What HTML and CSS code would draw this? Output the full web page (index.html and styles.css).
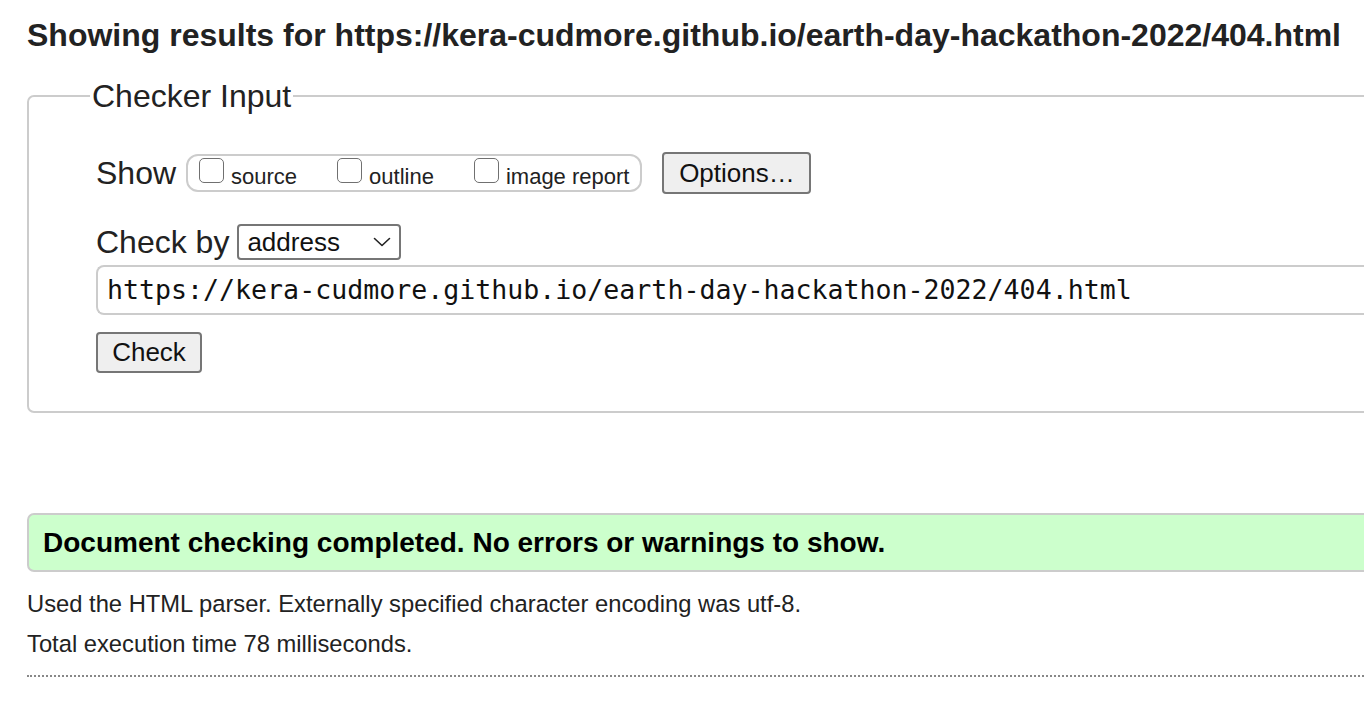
FILE: index.html
```html
<!DOCTYPE html>
<html lang="en">
<head>
<meta charset="utf-8">
<title>Showing results for https://kera-cudmore.github.io/earth-day-hackathon-2022/404.html - Nu Html Checker</title>
<link rel="stylesheet" href="styles.css">
</head>
<body>
<div class="page">
  <h2 class="results-title">Showing results for https://kera-cudmore.github.io/earth-day-hackathon-2022/404.html</h2>

  <form class="checker">
    <fieldset class="checker-fieldset">
      <legend class="checker-legend">Checker Input</legend>

      <div class="row show-row">
        <span class="row-label">Show</span>
        <div class="show-group">
          <label class="opt"><input type="checkbox" class="cb"><span>source</span></label>
          <label class="opt"><input type="checkbox" class="cb"><span>outline</span></label>
          <label class="opt"><input type="checkbox" class="cb"><span>image report</span></label>
        </div>
        <button type="button" class="btn btn-options">Options…</button>
      </div>

      <div class="row checkby-row">
        <span class="row-label">Check by</span>
        <div class="select">
          <span class="select-value">address</span>
          <svg class="chev" width="18" height="10" viewBox="0 0 18 10" aria-hidden="true"><path d="M1.5 1.5 L9 8.5 L16.5 1.5" fill="none" stroke="#222" stroke-width="1.6" stroke-linecap="round" stroke-linejoin="round"/></svg>
        </div>
      </div>

      <div class="url-input">https://kera-cudmore.github.io/earth-day-hackathon-2022/404.html</div>

      <div class="row">
        <button type="button" class="btn btn-check">Check</button>
      </div>
    </fieldset>
  </form>

  <div class="success">Document checking completed. No errors or warnings to show.</div>

  <p class="details">Used the HTML parser. Externally specified character encoding was utf-8.</p>
  <p class="details">Total execution time 78 milliseconds.</p>

  <hr class="dotted">
</div>
</body>
</html>
```

FILE: styles.css
```css
html, body {
  margin: 0;
  padding: 0;
  overflow: hidden;
  background: #fff;
}

body {
  font-family: "Liberation Sans", Arial, sans-serif;
  color: #222;
}

.page {
  width: 1520px;
  padding-left: 27px;
  box-sizing: border-box;
}

.results-title {
  margin: 0;
  padding-top: 15px;
  font-size: 32px;
  line-height: 40px;
  font-weight: bold;
  color: #222;
  white-space: nowrap;
}

.checker {
  margin: 23px 0 0 0;
}

.checker-fieldset {
  margin: 0;
  border: 2px solid #ccc;
  border-radius: 7px;
  padding: 38px 0 38px 67px;
}

.checker-legend {
  font-size: 32px;
  line-height: 36px;
  padding: 0 2px;
  margin-left: -6px;
  color: #222;
}

.row {
  display: flex;
  align-items: center;
}

.row-label {
  font-size: 32px;
  line-height: 37px;
}

.show-row {
  height: 42px;
}

.show-group {
  display: flex;
  align-items: center;
  gap: 40px;
  margin-left: 10px;
  height: 34px;
  padding: 0 11px;
  border: 2px solid #ccc;
  border-radius: 12px;
}

.opt {
  display: flex;
  align-items: flex-end;
  gap: 7px;
  font-size: 22px;
  line-height: 24px;
}

.opt span {
  position: relative;
  top: 3px;
}

.cb {
  appearance: none;
  -webkit-appearance: none;
  margin: 0;
  width: 25px;
  height: 25px;
  box-sizing: border-box;
  border: 1.5px solid #707070;
  border-radius: 5px;
  background: #fff;
  position: relative;
  top: -3px;
}

.btn {
  font-family: "Liberation Sans", Arial, sans-serif;
  font-size: 26px;
  color: #111;
  background: #efefef;
  border: 2px solid #767676;
  border-radius: 4px;
  padding: 0;
  box-sizing: border-box;
  flex-shrink: 0;
}

.btn-options {
  margin-left: 20px;
  width: 149px;
  height: 42px;
}

.checkby-row {
  margin-top: 30px;
  height: 36px;
}

.select {
  margin-left: 8px;
  width: 164px;
  height: 36px;
  box-sizing: border-box;
  border: 2px solid #767676;
  border-radius: 4px;
  display: flex;
  align-items: center;
  justify-content: space-between;
  padding: 0 8px 0 8px;
  font-size: 26px;
  color: #111;
}

.chev {
  display: block;
}

.url-input {
  margin-top: 5px;
  height: 50px;
  box-sizing: border-box;
  border: 2px solid #ccc;
  border-right: none;
  border-radius: 8px 0 0 8px;
  padding-left: 9px;
  font-family: "DejaVu Sans Mono", "Liberation Mono", monospace;
  font-size: 26.6px;
  line-height: 46px;
  color: #111;
  white-space: nowrap;
}

.btn-check {
  margin-top: 17px;
  width: 106px;
  height: 41px;
}

.success {
  margin-top: 100px;
  height: 59px;
  box-sizing: border-box;
  border: 2px solid #ccc;
  border-radius: 7px;
  background: #ccffcc;
  padding-left: 14px;
  font-size: 28px;
  font-weight: bold;
  line-height: 55px;
  color: #000;
}

.details {
  margin: 0;
  font-size: 23.75px;
  line-height: 40px;
  color: #222;
}

.success + .details {
  margin-top: 12px;
}

.dotted {
  margin: 11px 0 0 0;
  border: none;
  border-top: 2px dotted #888;
  height: 0;
}
```
